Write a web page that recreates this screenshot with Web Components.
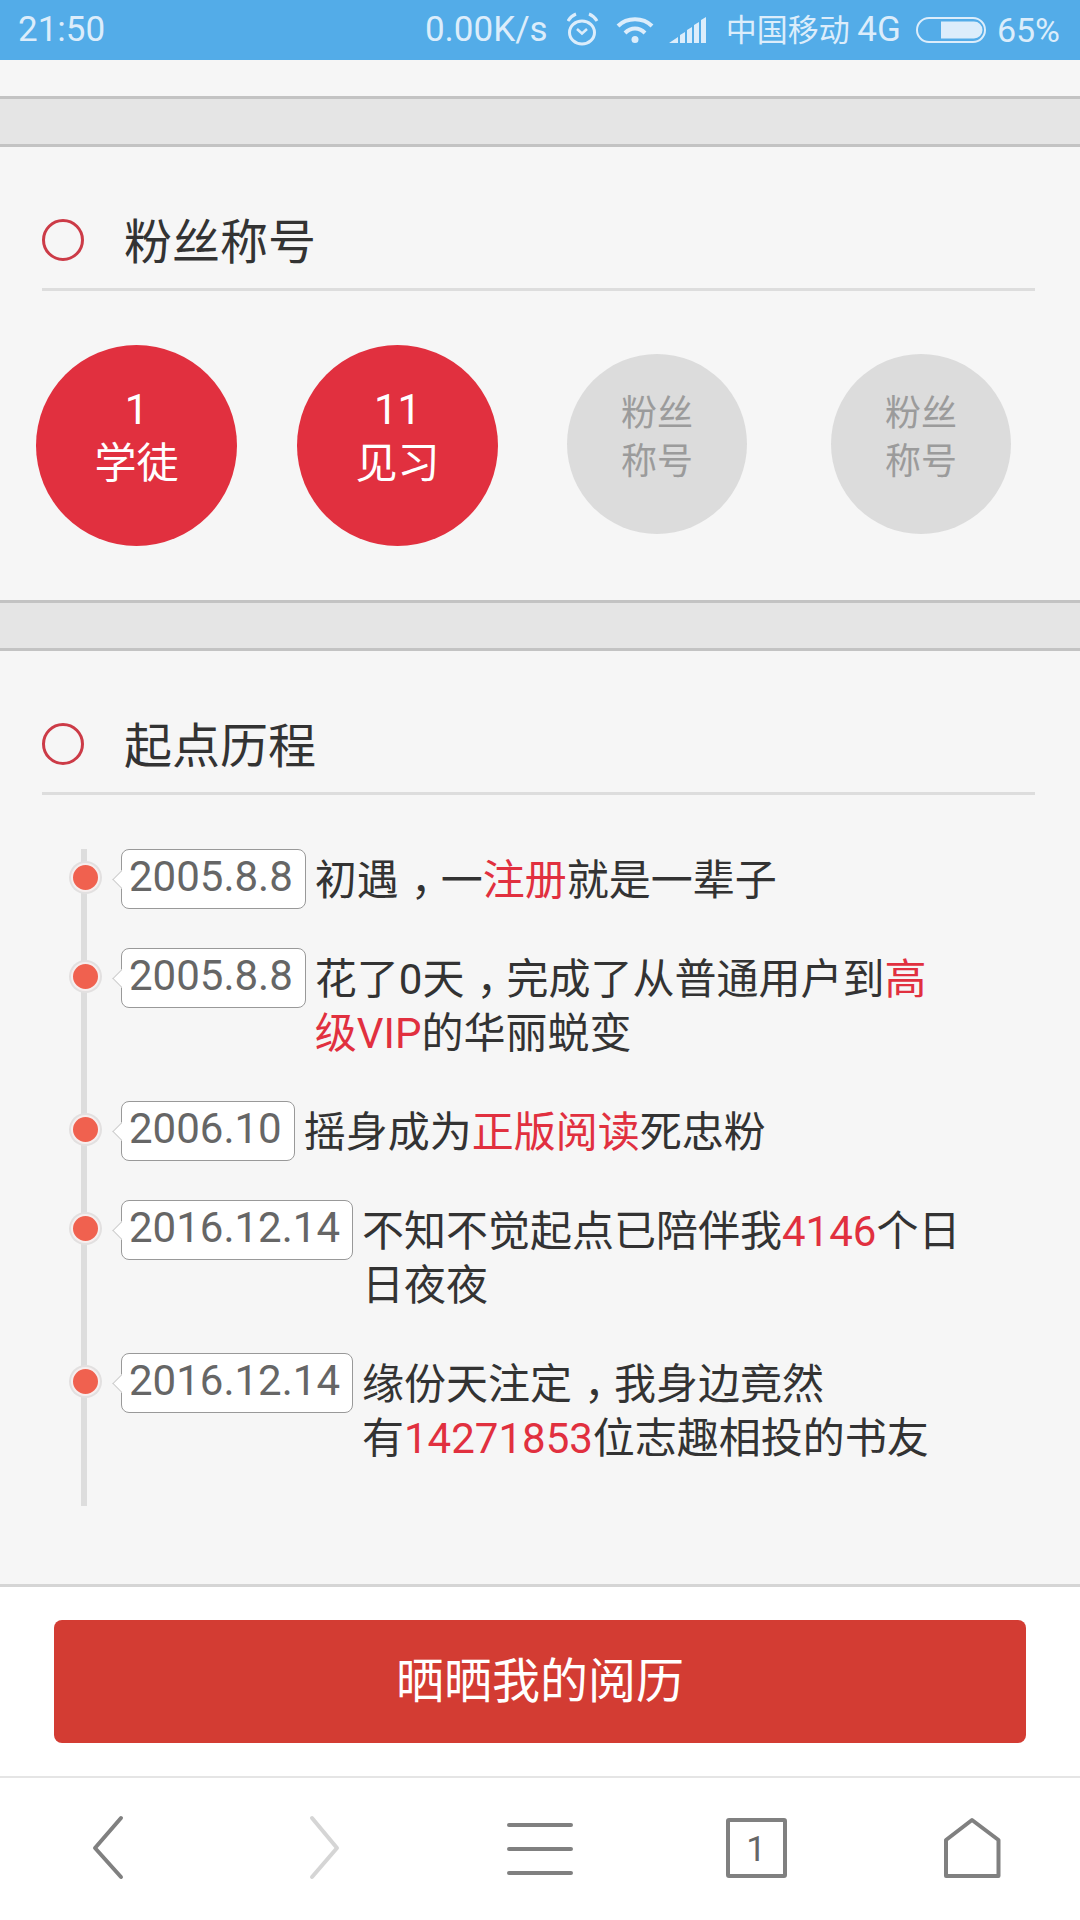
<!DOCTYPE html>
<html lang="zh">
<head>
<meta charset="utf-8">
<title>起点历程</title>
<style>
    html, body {
        margin: 0;
        padding: 0;
    }

    body {
        display: flex;
        flex-direction: column;
        width: 1080px;
        height: 1920px;
        overflow: hidden;
        background: #f6f6f6;
        font-family: Roboto, "Noto Sans CJK SC", sans-serif;
        color: #333;
    }

    main {
        flex: 1;
        padding-top: 36px;
    }

    .hl {
        color: #e1303f;
    }

    /* half width comma, padded back so it sits mid cell */
    .comma {
        font-feature-settings: "halt";
        padding: 0 9px 0 12px;
    }

    .badges {
        display: flex;
        align-items: center;
        height: 201px;
        margin: 54px 0 54px 36px;
    }

    .timeline {
        margin: 54px 0 0 81px;
    }
</style>
</head>
<body>
<status-bar></status-bar>
<main>
    <gap-band></gap-band>

    <page-section heading="粉丝称号">
        <div class="badges">
            <title-badge count="1" name="学徒" style="margin-right: 60px"></title-badge>
            <title-badge count="11" name="见习" style="margin-right: 69px"></title-badge>
            <title-badge locked style="margin-right: 84px"></title-badge>
            <title-badge locked></title-badge>
        </div>
    </page-section>

    <gap-band></gap-band>

    <page-section heading="起点历程">
        <div class="timeline">
            <timeline-row date="2005.8.8">初遇<span class="comma">，</span>一<span class="hl">注册</span>就是一辈子</timeline-row>
            <timeline-row date="2005.8.8">花了0天<span class="comma">，</span>完成了从普通用户到<span class="hl">高<br>级VIP</span>的华丽蜕变</timeline-row>
            <timeline-row date="2006.10">摇身成为<span class="hl">正版阅读</span>死忠粉</timeline-row>
            <timeline-row date="2016.12.14">不知不觉起点已陪伴我<span class="hl">4146</span>个日<br>日夜夜</timeline-row>
            <timeline-row date="2016.12.14">缘份天注定<span class="comma">，</span>我身边竟然<br>有<span class="hl">14271853</span>位志趣相投的书友</timeline-row>
        </div>
    </page-section>
</main>

<share-bar>晒晒我的阅历</share-bar>
<browser-toolbar></browser-toolbar>

<script>
class StatusBar extends HTMLElement {
    constructor() {
        super();
        this.attachShadow({ mode: "open" }).innerHTML = `
            <style>
                :host {
                    display: flex;
                    align-items: center;
                    flex: none;
                    height: 60px;
                    padding: 0 20px 0 18px;
                    box-sizing: border-box;
                    background: #53ace8;
                    color: #dcedfb;
                    font: 35px/60px Roboto, "Noto Sans CJK SC", sans-serif;
                }
                .time { margin-right: auto; }
                svg { display: block; flex: none; }
                .speed { margin-right: 19px; }
                .carrier { font-size: 31px; margin-right: 15px; }
                .carrier b { font-weight: 400; font-size: 35px; }
                .level { font-size: 34px; }
            </style>
            <span class="time">21:50</span>
            <span class="speed">0.00K/s</span>
            <svg width="32" height="60" viewBox="566 0 32 60" fill="none" stroke="#dcedfb" style="margin-right: 17px">
                <ellipse cx="581" cy="32.500" rx="12.500" ry="11.500" stroke-width="3"/>
                <path d="M576 29l5 4.500 5-4.500" stroke-width="2.500"/>
                <path d="M567 21q3-5 8-7M596 21q-3-5-8-7" stroke-width="3"/>
            </svg>
            <svg width="38" height="60" viewBox="615 0 38 60" fill="none" stroke="#dcedfb" stroke-width="4" style="margin-right: 15px">
                <path d="M617 26C626 17 642 17 651 26"/>
                <path d="M624 33C630 27 638 27 644 33"/>
                <circle cx="634" cy="39.500" r="3.500" fill="#dcedfb" stroke="none"/>
            </svg>
            <svg width="37" height="60" viewBox="671 0 37 60" fill="#dcedfb" style="margin-right: 20px">
                <path d="M671 43L680 37V43ZM682 43V35L687 32V43ZM689 43V30L694 27V43ZM696 43V25L701 22V43ZM703 43V20L708 17V43Z"/>
            </svg>
            <span class="carrier">中国移动 <b>4G</b></span>
            <svg width="70" height="26" viewBox="0 0 70 26" style="margin-right: 11px">
                <rect x="1" y="1" width="68" height="24" rx="12" fill="none" stroke="#dcedfb" stroke-width="2"/>
                <path d="M25 4.500H58a8.500 8.500 0 0 1 0 17H25Z" fill="#dcedfb"/>
            </svg>
            <span class="level">65%</span>
        `;
    }
}

class GapBand extends HTMLElement {
    constructor() {
        super();
        this.attachShadow({ mode: "open" }).innerHTML = `
            <style>
                :host {
                    display: block;
                    height: 51px;
                    box-sizing: border-box;
                    background: #e5e5e5;
                    border-top: 3px solid #c3c3c3;
                    border-bottom: 3px solid #c3c3c3;
                }
            </style>
        `;
    }
}

class PageSection extends HTMLElement {
    constructor() {
        super();
        this.attachShadow({ mode: "open" }).innerHTML = `
            <style>
                :host { display: block; }
                header {
                    display: flex;
                    align-items: center;
                    height: 144px;
                    margin: 0 45px 0 42px;
                    padding: 72px 0 27px;
                    box-sizing: border-box;
                    border-bottom: 3px solid #ddd;
                }
                .ring {
                    flex: none;
                    width: 42px;
                    height: 42px;
                    box-sizing: border-box;
                    border: 3px solid #cc3b47;
                    border-radius: 50%;
                    margin-right: 40px;
                }
                h2 {
                    margin: 0 0 4px;
                    font: 400 48px/48px "Noto Sans CJK SC", sans-serif;
                    color: #333;
                }
            </style>
            <header>
                <div class="ring"></div>
                <h2></h2>
            </header>
            <slot></slot>
        `;
        this.shadowRoot.querySelector("h2").textContent = this.getAttribute("heading");
    }
}

class TitleBadge extends HTMLElement {
    constructor() {
        super();
        const locked = this.hasAttribute("locked");
        this.attachShadow({ mode: "open" }).innerHTML = `
            <style>
                :host {
                    display: flex;
                    flex-direction: column;
                    align-items: center;
                    justify-content: center;
                    flex: none;
                    border-radius: 50%;
                    width: 201px;
                    height: 201px;
                    padding-bottom: 18px;
                    box-sizing: border-box;
                    background: #e1303f;
                    color: #fff;
                    font: 42px/54px Roboto, "Noto Sans CJK SC", sans-serif;
                }
                :host([locked]) {
                    width: 180px;
                    height: 180px;
                    margin-bottom: 3px;
                    padding-bottom: 12px;
                    background: #dcdcdc;
                    color: #9b9b9b;
                    font-size: 36px;
                    line-height: 48px;
                }
            </style>
            ${locked
                ? "<span>粉丝</span><span>称号</span>"
                : `<span>${this.getAttribute("count")}</span><span>${this.getAttribute("name")}</span>`}
        `;
    }
}

class TimelineRow extends HTMLElement {
    constructor() {
        super();
        this.attachShadow({ mode: "open" }).innerHTML = `
            <style>
                :host {
                    display: flex;
                    align-items: flex-start;
                    padding: 0 0 39px 40px;
                    position: relative;
                    font: 42px/54px Roboto, "Noto Sans CJK SC", sans-serif;
                    color: #333;
                }
                /* the vertical rail, each row draws its own piece */
                :host::before {
                    content: "";
                    position: absolute;
                    left: 0;
                    top: 0;
                    bottom: 0;
                    width: 6px;
                    background: #ddd;
                }
                .dot {
                    position: absolute;
                    left: -10px;
                    top: 14px;
                    width: 29px;
                    height: 29px;
                    box-sizing: border-box;
                    border-radius: 50%;
                    background: #f0614f;
                    border: 2px solid #f6eeee;
                    box-shadow: 0 0 0 2px #e2e0e0;
                }
                .tag {
                    position: relative;
                    flex: none;
                    height: 60px;
                    box-sizing: border-box;
                    padding: 0 12px 0 7px;
                    margin-right: 9px;
                    background: #fff;
                    border: 1px solid #999;
                    border-radius: 8px;
                    line-height: 54px;
                    color: #666;
                }
                .tag::before {
                    content: "";
                    position: absolute;
                    left: -7.500px;
                    top: 22.500px;
                    width: 13px;
                    height: 13px;
                    box-sizing: border-box;
                    background: #fff;
                    border-left: 1px solid #ccc;
                    border-bottom: 1px solid #ccc;
                    transform: rotate(45deg);
                }
                .text { padding: 5px 0 1px; }
            </style>
            <div class="dot"></div>
            <div class="tag"></div>
            <div class="text"><slot></slot></div>
        `;
        this.shadowRoot.querySelector(".tag").textContent = this.getAttribute("date");
    }
}

class ShareBar extends HTMLElement {
    constructor() {
        super();
        this.attachShadow({ mode: "open" }).innerHTML = `
            <style>
                :host {
                    display: block;
                    flex: none;
                    height: 192px;
                    box-sizing: border-box;
                    background: #fff;
                    border-top: 3px solid #d5d5d5;
                    padding: 33px 54px 0;
                }
                button {
                    display: block;
                    width: 100%;
                    height: 123px;
                    padding: 0 0 9px;
                    box-sizing: border-box;
                    border: 0;
                    border-radius: 8px;
                    background: #d33c33;
                    color: #fff;
                    font: 48px/60px "Noto Sans CJK SC", sans-serif;
                }
            </style>
            <button><slot></slot></button>
        `;
    }
}

class BrowserToolbar extends HTMLElement {
    constructor() {
        super();
        this.attachShadow({ mode: "open" }).innerHTML = `
            <style>
                :host {
                    display: grid;
                    grid-template-columns: repeat(5, 1fr);
                    justify-items: center;
                    align-content: start;
                    flex: none;
                    height: 144px;
                    padding-top: 30px;
                    box-sizing: border-box;
                    background: #fff;
                    border-top: 2px solid #e5e5e5;
                }
                svg { display: block; fill: none; stroke: #808080; stroke-width: 4; stroke-linejoin: round; stroke-linecap: round; }
                text { font: 35px Roboto, sans-serif; fill: #666; stroke: none; }
            </style>
            <svg width="80" height="80" viewBox="0 0 80 80"><path d="M53 10L27 40L53 69"/></svg>
            <svg width="80" height="80" viewBox="0 0 80 80" style="stroke: #d5d5d5"><path d="M28 10L53 40L28 69"/></svg>
            <svg width="80" height="80" viewBox="0 0 80 80"><path d="M9 17H71M9 41H71M9 65H71"/></svg>
            <svg width="80" height="80" viewBox="0 0 80 80">
                <rect x="12" y="12" width="57" height="56" rx="1"/>
                <text x="40" y="53" text-anchor="middle">1</text>
            </svg>
            <svg width="80" height="80" viewBox="0 0 80 80"><path d="M14 68V32L40 12L66.500 32V68Z"/></svg>
        `;
    }
}

customElements.define("status-bar", StatusBar);
customElements.define("gap-band", GapBand);
customElements.define("page-section", PageSection);
customElements.define("title-badge", TitleBadge);
customElements.define("timeline-row", TimelineRow);
customElements.define("share-bar", ShareBar);
customElements.define("browser-toolbar", BrowserToolbar);
</script>
</body>
</html>
